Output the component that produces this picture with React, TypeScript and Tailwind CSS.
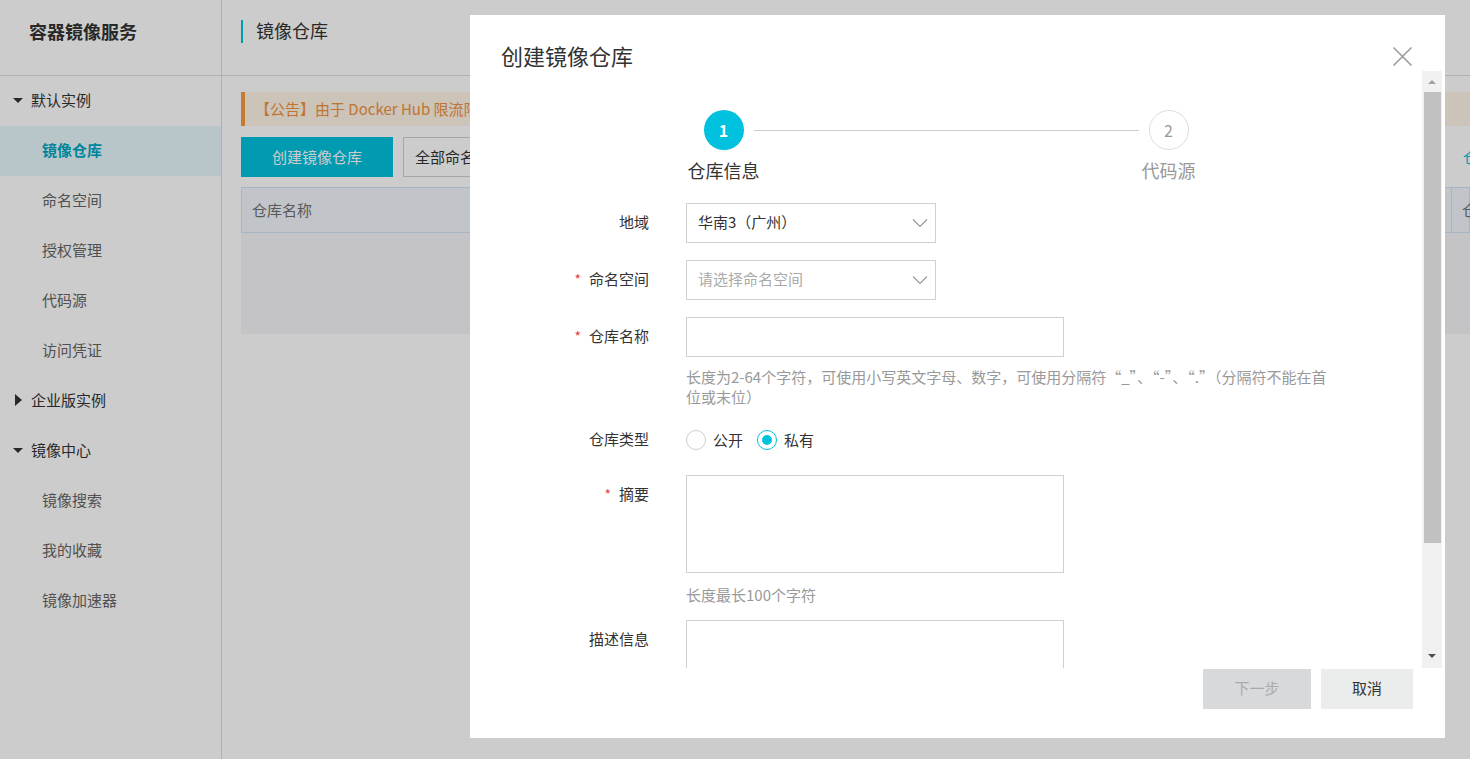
import React from 'react';

const navGroups = [
  { title: '默认实例', open: true, items: ['镜像仓库', '命名空间', '授权管理', '代码源', '访问凭证'] },
  { title: '企业版实例', open: false, items: [] },
  { title: '镜像中心', open: true, items: ['镜像搜索', '我的收藏', '镜像加速器'] },
];

const Sidebar: React.FC = () => (
  <aside className="w-[222px] shrink-0 border-r border-[#dcdcdc] bg-white">
    <div className="h-[76px] border-b border-[#dcdcdc] pl-[29px] pt-[18px] text-[18px] font-bold leading-[26px] text-[#333]">
      容器镜像服务
    </div>
    {navGroups.map((group) => (
      <div key={group.title}>
        <div className="flex h-[50px] items-center pb-[2px] pl-[13px] text-[#333]">
          <span className="flex w-[10px] justify-center">
            {group.open ? (
              <span className="h-0 w-0 border-x-[5px] border-t-[5px] border-x-transparent border-t-[#333]" />
            ) : (
              <span className="h-0 w-0 border-y-[6px] border-l-[7px] border-y-transparent border-l-[#333]" />
            )}
          </span>
          <span className="ml-[8px]">{group.title}</span>
        </div>
        {group.items.map((item) => (
          <div
            key={item}
            className={`flex h-[50px] items-center pb-[2px] pl-[42px] ${
              item === '镜像仓库' ? 'bg-[#e6f8fc] font-bold text-[#00a8c4]' : 'text-[#666]'
            }`}
          >
            {item}
          </div>
        ))}
      </div>
    ))}
  </aside>
);

const Main: React.FC = () => (
  <main className="min-w-0 flex-1 overflow-hidden bg-white">
    <div className="flex h-[76px] items-start border-b border-[#dcdcdc] pl-[19px] pt-[20px]">
      <span className="h-[23px] w-[2px] bg-[#00c1de]" />
      <span className="ml-[13px] text-[18px] leading-[21px] text-[#333]">镜像仓库</span>
    </div>
    <div className="pl-[19px] pt-[16px]">
      {/* Announcement */}
      <div className="flex h-[34px] items-center whitespace-nowrap border-l-4 border-[#f99a3c] bg-[#fff4e8] pl-[10px] text-[#f0923e]">
        【公告】由于 Docker Hub 限流限制，部分镜像拉取可能失败，建议使用镜像加速器
      </div>
      {/* Toolbar */}
      <div className="mt-[11px] flex h-[40px] whitespace-nowrap">
        <button className="w-[152px] shrink-0 bg-[#00c1de] text-white">创建镜像仓库</button>
        <div className="ml-[10px] flex w-[1040px] shrink-0 items-center border border-[#d0d0d0] pl-[11px] text-[#333]">
          全部命名空间
        </div>
        <span className="ml-[20px] flex items-center text-[#00c1de]">仓库管理</span>
      </div>
      {/* Table */}
      <div className="mt-[10px]">
        <div className="flex h-[46px] border border-[#d3e2f5] bg-[#f2f5fc] whitespace-nowrap text-[#707070]">
          <div className="flex w-[1210px] shrink-0 items-center border-r border-[#d3e2f5] pl-[10px]">仓库名称</div>
          <div className="flex items-center pl-[10px]">仓库地址</div>
        </div>
        <div className="h-[101px] bg-[#f5f6f9]" />
      </div>
    </div>
  </main>
);

const Chevron: React.FC = () => (
  <svg width="16" height="10" viewBox="0 0 16 10">
    <path d="M1 1.5 8 8.5 15 1.5" fill="none" stroke="#999" strokeWidth="1.2" />
  </svg>
);

const Select: React.FC<{ value?: string; placeholder?: string }> = ({ value, placeholder }) => (
  <div className="flex h-[40px] w-[250px] items-center justify-between border border-[#d0d0d0] pl-[11px] pr-[7px]">
    <span className={`pb-[2px] ${value ? 'text-[#333]' : 'text-[#aaa]'}`}>{value ?? placeholder}</span>
    <Chevron />
  </div>
);

const FormRow: React.FC<{ label: string; required?: boolean; className?: string; children: React.ReactNode }> = ({
  label,
  required,
  className,
  children,
}) => (
  <div className={`flex ${className ?? ''}`}>
    <div className="w-[179px] shrink-0 text-right leading-[37px] text-[#333]">
      {required && <span className="mr-[8px] text-[14px] text-[#e64545]">*</span>}
      {label}
    </div>
    <div className="ml-[37px]">{children}</div>
  </div>
);

const Scrollbar: React.FC = () => (
  <div className="flex w-[20px] shrink-0 flex-col bg-[#f1f1f1]">
    <div className="flex h-[21px] items-center justify-center">
      <span className="h-0 w-0 border-x-[4px] border-b-[4px] border-x-transparent border-b-[#a3a3a3]" />
    </div>
    <div className="ml-[2px] h-[451px] w-[17px] bg-[#c1c1c1]" />
    <div className="flex-1" />
    <div className="flex h-[24px] items-center justify-center">
      <span className="h-0 w-0 border-x-[4px] border-t-[4px] border-x-transparent border-t-[#505050]" />
    </div>
  </div>
);

const Modal: React.FC = () => (
  <div className="absolute left-[470px] top-[15px] flex h-[723px] w-[975px] flex-col bg-white">
    <div className="flex h-[56px] shrink-0 items-start justify-between">
      <h2 className="pl-[31px] pt-[25px] text-[22px] font-normal leading-[30px] text-[#333]">创建镜像仓库</h2>
      <svg className="mr-[33px] mt-[32px]" width="19" height="19" viewBox="0 0 19 19">
        <path d="M0.5 0.5 18.5 18.5 M18.5 0.5 0.5 18.5" stroke="#999" strokeWidth="1.5" />
      </svg>
    </div>

    <div className="flex h-[597px] shrink-0 pr-[3px]">
      <div className="min-w-0 flex-1 overflow-hidden">
        {/* Steps */}
        <div className="flex justify-center pt-[39px]">
          <div className="flex w-[120px] shrink-0 flex-col items-center">
            <div className="flex h-[40px] w-[40px] items-center justify-center rounded-full bg-[#00c1de] text-[16px] font-bold text-white">
              1
            </div>
            <div className="mt-[8px] text-[18px] leading-[24px] text-[#333]">仓库信息</div>
          </div>
          <div className="-mx-[30px] mt-[20px] h-px w-[385px] shrink-0 bg-[#cccccc]" />
          <div className="flex w-[120px] shrink-0 flex-col items-center">
            <div className="flex h-[40px] w-[40px] items-center justify-center rounded-full border border-[#dddddd] text-[16px] text-[#999]">
              2
            </div>
            <div className="mt-[8px] text-[18px] leading-[24px] text-[#999]">代码源</div>
          </div>
        </div>

        {/* Form */}
        <div className="mt-[21px] flex flex-col">
          <FormRow label="地域" className="mb-[17px]">
            <Select value="华南3（广州）" />
          </FormRow>
          <FormRow label="命名空间" required className="mb-[17px]">
            <Select placeholder="请选择命名空间" />
          </FormRow>
          <FormRow label="仓库名称" required className="mb-[13px]">
            <div className="h-[40px] w-[378px] border border-[#d0d0d0]" />
            <p className="mt-[10px] w-[645px] leading-[20px] text-[#999]">
              长度为2-64个字符，可使用小写英文字母、数字，可使用分隔符“_”、“-”、“.”（分隔符不能在首位或末位）
            </p>
          </FormRow>
          <FormRow label="仓库类型" className="mb-[15px]">
            <div className="flex h-[40px] items-center text-[#333]">
              <span className="h-[20px] w-[20px] rounded-full border border-[#cccccc]" />
              <span className="ml-[7px]">公开</span>
              <span className="ml-[14px] flex h-[20px] w-[20px] items-center justify-center rounded-full border-[1.5px] border-[#00c1de]">
                <span className="h-[10px] w-[10px] rounded-full bg-[#00c1de]" />
              </span>
              <span className="ml-[7px]">私有</span>
            </div>
          </FormRow>
          <FormRow label="摘要" required className="mb-[15px]">
            <div className="h-[98px] w-[378px] border border-[#d0d0d0]" />
            <p className="mt-[12px] leading-[20px] text-[#999]">长度最长100个字符</p>
          </FormRow>
          <FormRow label="描述信息">
            <div className="h-[98px] w-[378px] border border-[#d0d0d0]" />
          </FormRow>
        </div>
      </div>
      <Scrollbar />
    </div>

    <div className="flex justify-end gap-[10px] pr-[32px] pt-[1px]">
      <button className="h-[40px] w-[108px] bg-[#d8d9db] pb-[2px] text-[#aaa]">下一步</button>
      <button className="h-[40px] w-[92px] bg-[#ebecec] pb-[2px] text-[#333]">取消</button>
    </div>
  </div>
);

export default function App() {
  return (
    <div className="relative h-[759px] w-[1470px] overflow-hidden bg-white font-['Noto_Sans_CJK_SC','Noto_Sans',sans-serif] text-[15px]">
      <div className="flex h-full">
        <Sidebar />
        <Main />
      </div>
      <div className="absolute inset-0 bg-black/20" />
      <Modal />
    </div>
  );
}
